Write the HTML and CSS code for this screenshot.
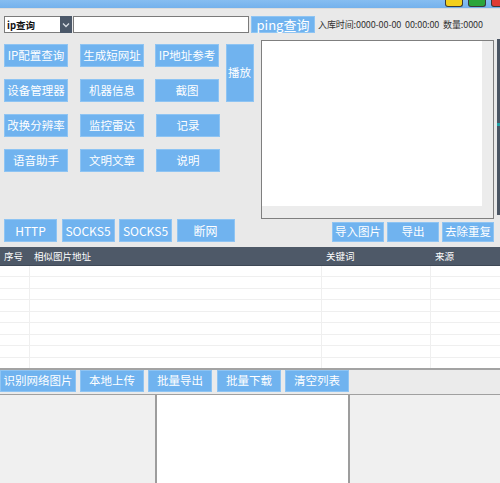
FILE: index.html
```html
<!DOCTYPE html>
<html lang="zh-CN">
<head>
<meta charset="utf-8">
<title>工具</title>
<link rel="stylesheet" href="styles.css">
</head>
<body>
<div class="app">
  <div class="titlebar">
    <span class="win-btn win-min"></span>
    <span class="win-btn win-max"></span>
    <span class="win-btn win-close"></span>
  </div>

  <div class="toolbar">
    <div class="combo">ip查询</div>
    <div class="combo-arrow">
      <svg width="8" height="6" viewBox="0 0 8 6"><path d="M1 1.5 L4 4.5 L7 1.5" fill="none" stroke="#d8dde4" stroke-width="1.3"/></svg>
    </div>
    <div class="search-input"></div>
    <div class="btn ping-btn">ping查询</div>
    <div class="stats">入库时间:0000-00-00&nbsp;&nbsp;00:00:00&nbsp;&nbsp;数量:0000</div>
  </div>

  <div class="upper">
    <div class="panel-left">
      <div class="btn-grid">
        <div class="btn">IP配置查询</div>
        <div class="btn">生成短网址</div>
        <div class="btn">IP地址参考</div>
        <div class="btn btn-tall">播放</div>
        <div class="btn">设备管理器</div>
        <div class="btn">机器信息</div>
        <div class="btn">截图</div>
        <div class="btn row-start">改换分辨率</div>
        <div class="btn">监控雷达</div>
        <div class="btn shift">记录</div>
        <div class="btn row-start">语音助手</div>
        <div class="btn">文明文章</div>
        <div class="btn shift">说明</div>
      </div>
      <div class="proxy-row">
        <div class="btn proxy-btn">HTTP</div>
        <div class="btn proxy-btn">SOCKS5</div>
        <div class="btn proxy-btn">SOCKS5</div>
        <div class="btn proxy-btn wide">断网</div>
      </div>
    </div>
    <div class="panel-right">
      <div class="textbox"><div class="textbox-inner"></div></div>
      <div class="action-row">
        <div class="btn action-btn">导入图片</div>
        <div class="btn action-btn">导出</div>
        <div class="btn action-btn">去除重复</div>
      </div>
    </div>
    <div class="sidebar"><span class="sidebar-dot"></span></div>
  </div>

  <table class="grid">
    <colgroup>
      <col class="c-no"><col class="c-url"><col class="c-key"><col class="c-src">
    </colgroup>
    <thead>
      <tr><th>序号</th><th>相似图片地址</th><th>关键词</th><th>来源</th></tr>
    </thead>
    <tbody>
      <tr><td></td><td></td><td></td><td></td></tr>
      <tr><td></td><td></td><td></td><td></td></tr>
      <tr><td></td><td></td><td></td><td></td></tr>
      <tr><td></td><td></td><td></td><td></td></tr>
      <tr><td></td><td></td><td></td><td></td></tr>
      <tr><td></td><td></td><td></td><td></td></tr>
      <tr><td></td><td></td><td></td><td></td></tr>
      <tr><td></td><td></td><td></td><td></td></tr>
      <tr class="last"><td></td><td></td><td></td><td></td></tr>
    </tbody>
  </table>

  <div class="bottom-bar">
    <div class="btn bar-btn first">识别网络图片</div>
    <div class="btn bar-btn">本地上传</div>
    <div class="btn bar-btn">批量导出</div>
    <div class="btn bar-btn gap5">批量下载</div>
    <div class="btn bar-btn">清空列表</div>
  </div>

  <div class="panels">
    <div class="pane pane-left"></div>
    <div class="pane pane-mid"></div>
    <div class="pane pane-right"></div>
  </div>
</div>
</body>
</html>
```

FILE: styles.css
```css
* { box-sizing: border-box; }

html, body {
  margin: 0;
  padding: 0;
}

body {
  width: 500px;
  height: 483px;
  overflow: hidden;
  background: #e9e9e9;
  font-family: "Noto Sans CJK SC", "Microsoft YaHei", sans-serif;
  color: #222;
}

.app {
  width: 500px;
  height: 483px;
  display: flex;
  flex-direction: column;
  overflow: hidden;
}

/* title bar */
.titlebar {
  height: 9px;
  flex: none;
  background: linear-gradient(#86bdf1, #74b1ec);
  display: flex;
  justify-content: flex-end;
  gap: 5px;
  overflow: hidden;
  border-bottom: 1px solid #dcdcdc;
}

.win-btn {
  width: 18px;
  height: 7px;
  flex: none;
  border: 1px solid #3a3a3a;
  border-top: none;
  border-radius: 0 0 3px 3px;
}

.win-min { background: #f2cf1d; }
.win-max { background: #2aa53a; }
.win-close { background: #df3b35; margin-right: -9px; }

/* generic button */
.btn {
  background: #70b3ef;
  border: 1px solid #8ec4f3;
  color: #fff;
  font-size: 11.5px;
  display: flex;
  align-items: center;
  justify-content: center;
  white-space: nowrap;
  line-height: 1;
}

/* toolbar row */
.toolbar {
  flex: none;
  height: 17px;
  margin-top: 7px;
  padding-left: 4px;
  display: flex;
  align-items: stretch;
}

.combo {
  width: 56px;
  background: #fff;
  border: 1px solid #7b7b7b;
  border-right: none;
  font-size: 9.5px;
  font-weight: bold;
  color: #111;
  padding-left: 2px;
  display: flex;
  align-items: center;
}

.combo-arrow {
  width: 12px;
  background: #4b5869;
  display: flex;
  align-items: center;
  justify-content: center;
}

.search-input {
  width: 176px;
  margin-left: 1px;
  background: #fff;
  border: 1px solid #7b7b7b;
}

.ping-btn {
  width: 64px;
  margin-left: 2px;
  font-size: 13px;
}

.stats {
  margin-left: 3px;
  font-size: 9px;
  color: #333;
  display: flex;
  align-items: center;
  white-space: nowrap;
  letter-spacing: -0.1px;
}

/* upper area */
.upper {
  flex: none;
  height: 214px;
  display: flex;
}

.panel-left {
  width: 261px;
  flex: none;
  display: flex;
  flex-direction: column;
  padding-bottom: 5px;
}

.btn-grid {
  margin-top: 11px;
  padding-left: 4px;
  display: grid;
  grid-template-columns: 76px 75px 71px 28px;
  grid-auto-rows: 23px;
  row-gap: 12px;
}

.btn-grid .btn {
  width: 64px;
}

.btn-grid .row-start {
  grid-column: 1;
}

.btn-grid .shift {
  margin-left: 1px;
}

.btn-grid .btn-tall {
  width: 28px;
  grid-column: 4;
  grid-row: 1 / span 2;
  justify-content: flex-start;
  padding-left: 1px;
}

.proxy-row {
  margin-top: auto;
  padding-left: 4px;
  display: flex;
  gap: 4.5px;
  height: 23px;
}

.proxy-btn {
  width: 53px;
  font-size: 12px;
}

.proxy-btn.wide {
  width: 58px;
}

.panel-right {
  width: 233px;
  flex: none;
  display: flex;
  flex-direction: column;
}

.textbox {
  margin-top: 7px;
  height: 179px;
  border: 1px solid #7f7f7f;
  background: #ececec;
}

.textbox-inner {
  width: 220px;
  height: 165px;
  background: #fff;
}

.action-row {
  margin-top: 3px;
  height: 20px;
  display: flex;
  justify-content: flex-end;
  gap: 3px;
}

.action-btn {
  width: 52px;
}

.sidebar {
  width: 4px;
  margin-left: 3px;
  margin-top: 6px;
  height: 176px;
  background: #4a5563;
  display: flex;
  align-items: flex-start;
  padding-top: 84px;
}

.sidebar-dot {
  width: 3px;
  height: 3px;
  background: #1fa3a8;
}

/* data grid */
.grid {
  flex: none;
  width: 500px;
  border-collapse: collapse;
  table-layout: fixed;
  background: #fff;
  margin-top: 0;
}

.c-no { width: 29px; }
.c-url { width: 292px; }
.c-key { width: 109px; }
.c-src { width: 70px; }

.grid th {
  height: 18px;
  background: #4e5968;
  color: #fff;
  font-size: 9.5px;
  font-weight: normal;
  text-align: left;
  padding: 0 0 0 5px;
  border-bottom: 1px solid #3e4856;
}

.grid th:first-child { padding-left: 4px; }

.grid td {
  height: 11.5px;
  padding: 0;
  border-bottom: 1px solid #efefef;
  border-left: 1px solid #efefef;
}

.grid td:first-child { border-left: none; }

.grid tr.last td {
  border-bottom: 2px solid #a3a3a3;
}

/* bottom button bar */
.bottom-bar {
  flex: none;
  height: 25px;
  display: flex;
  align-items: center;
  gap: 4px;
  background: #ebebeb;
  border-bottom: 1px solid #a0a0a0;
  padding-bottom: 1px;
}

.bar-btn {
  width: 64px;
  height: 22px;
  font-size: 11.5px;
}

.bar-btn.first {
  width: 76px;
}

.bar-btn.gap5 {
  margin-left: 1px;
}

/* lower panes */
.panels {
  flex: 1;
  display: flex;
}

.pane-left {
  width: 155px;
  background: #f0f0f0;
}

.pane-mid {
  width: 195px;
  background: #fff;
  border-left: 2px solid #9d9d9d;
  border-right: 2px solid #9d9d9d;
}

.pane-right {
  flex: 1;
  background: #f0f0f0;
}
```
